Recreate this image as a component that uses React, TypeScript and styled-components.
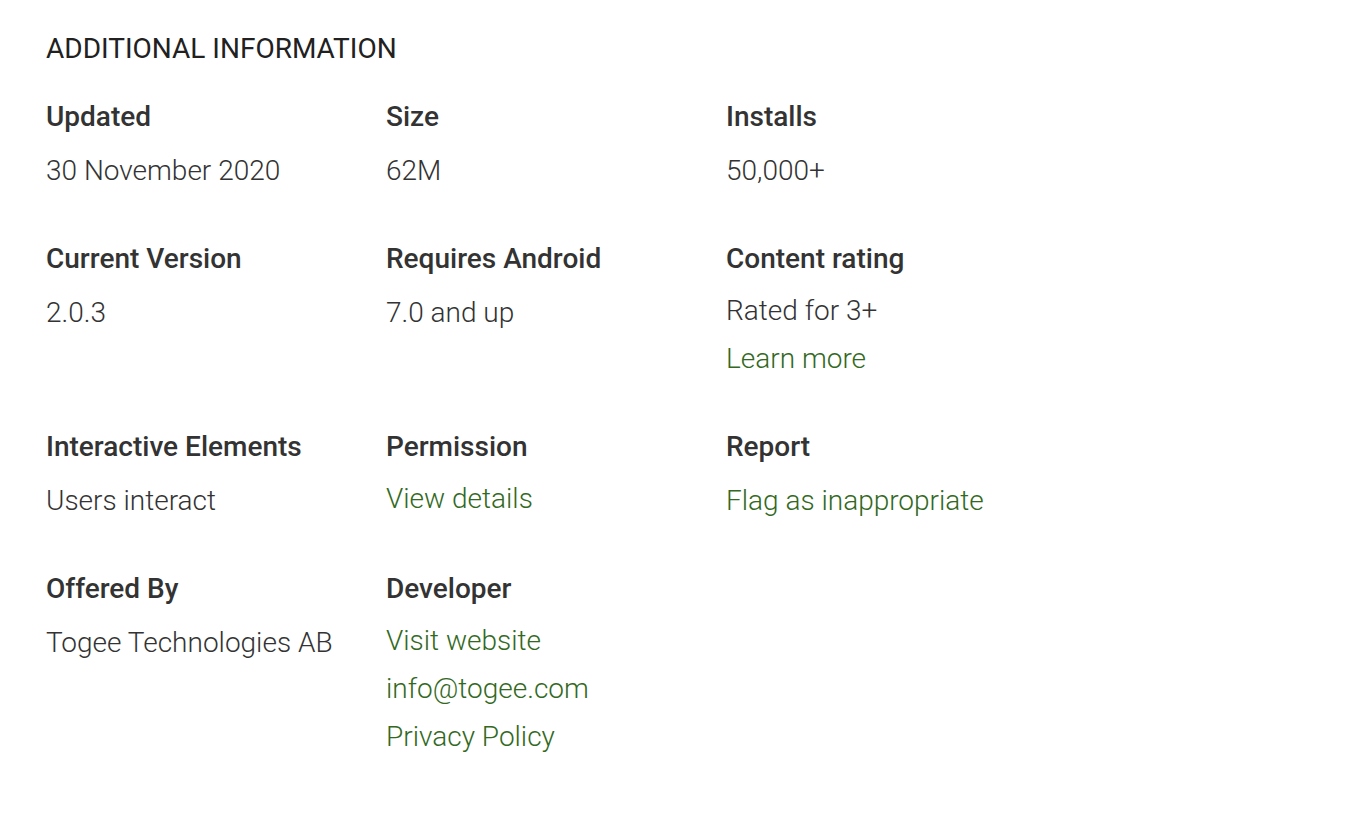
import React from "react";
import styled, { createGlobalStyle } from "styled-components";

const Global = createGlobalStyle`
  html, body { margin: 0; padding: 0; background: #fff; }
  body { font-family: Roboto, "Noto Sans", Arial, sans-serif; color: #333; }
`;

const Page = styled.div`
  padding: 25px 46px;
`;

const Title = styled.h2`
  margin: 0 0 20px;
  font-size: 28px;
  font-weight: 400;
  line-height: 48px;
  color: #212121;
`;

const Grid = styled.div`
  display: grid;
  grid-template-columns: repeat(3, 340px);
  row-gap: 40px;
`;

const Item = styled.div`
  display: flex;
  flex-direction: column;
`;

const Label = styled.div`
  font-size: 28px;
  font-weight: 500;
  line-height: 48px;
  color: #333;
`;

const Values = styled.div<{ $offset: number }>`
  display: flex;
  flex-direction: column;
  margin-top: ${(p) => p.$offset}px;
`;

const Value = styled.div`
  font-size: 28px;
  font-weight: 300;
  line-height: 48px;
  color: #333;
`;

const Link = styled.a`
  font-size: 28px;
  font-weight: 300;
  line-height: 48px;
  color: #33691e;
  text-decoration: none;
`;

type Entry = { label: string; lines: { text: string; link?: boolean }[]; offset?: number };

const entries: Entry[] = [
  { label: "Updated", lines: [{ text: "30 November 2020" }] },
  { label: "Size", lines: [{ text: "62M" }] },
  { label: "Installs", lines: [{ text: "50,000+" }] },
  { label: "Current Version", lines: [{ text: "2.0.3" }] },
  { label: "Requires Android", lines: [{ text: "7.0 and up" }] },
  {
    label: "Content rating",
    lines: [{ text: "Rated for 3+" }, { text: "Learn more", link: true }],
    offset: 4,
  },
  { label: "Interactive Elements", lines: [{ text: "Users interact" }] },
  { label: "Permission", lines: [{ text: "View details", link: true }], offset: 4 },
  { label: "Report", lines: [{ text: "Flag as inappropriate", link: true }], offset: 6 },
  { label: "Offered By", lines: [{ text: "Togee Technologies AB" }] },
  {
    label: "Developer",
    lines: [
      { text: "Visit website", link: true },
      { text: "info@togee.com", link: true },
      { text: "Privacy Policy", link: true },
    ],
    offset: 4,
  },
];

export default function App() {
  return (
    <Page>
      <Global />
      <Title>ADDITIONAL INFORMATION</Title>
      <Grid>
        {entries.map((e) => (
          <Item key={e.label}>
            <Label>{e.label}</Label>
            <Values $offset={e.offset ?? 6}>
              {e.lines.map((l) =>
                l.link ? (
                  <Link key={l.text} href="#">
                    {l.text}
                  </Link>
                ) : (
                  <Value key={l.text}>{l.text}</Value>
                )
              )}
            </Values>
          </Item>
        ))}
      </Grid>
    </Page>
  );
}
